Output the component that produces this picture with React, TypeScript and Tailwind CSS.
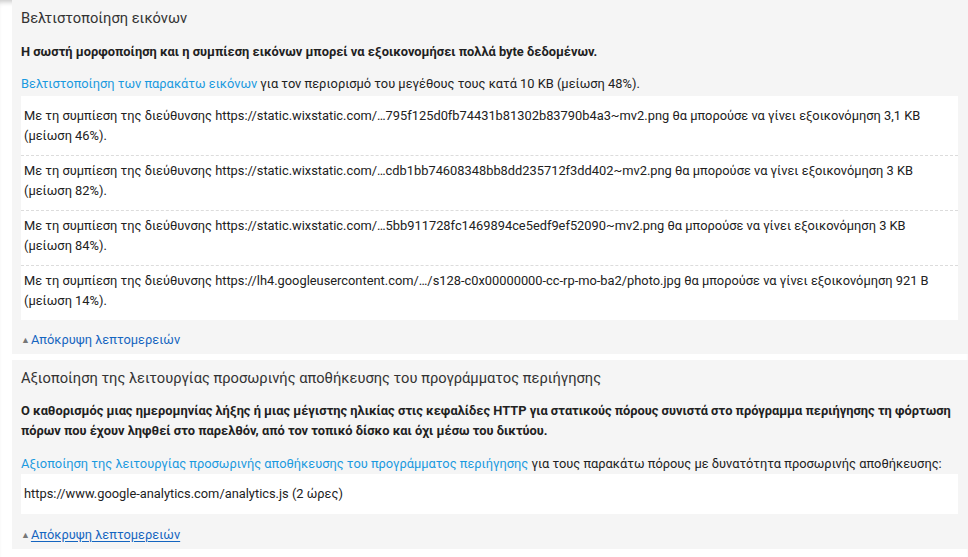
import React from 'react'

type Row = { url: string; saving: string; percent: string }

const imageRows: Row[] = [
  {
    url: 'https://static.wixstatic.com/…795f125d0fb74431b81302b83790b4a3~mv2.png',
    saving: '3,1 KB',
    percent: '46%',
  },
  {
    url: 'https://static.wixstatic.com/…cdb1bb74608348bb8dd235712f3dd402~mv2.png',
    saving: '3 KB',
    percent: '82%',
  },
  {
    url: 'https://static.wixstatic.com/…5bb911728fc1469894ce5edf9ef52090~mv2.png',
    saving: '3 KB',
    percent: '84%',
  },
  {
    url: 'https://lh4.googleusercontent.com/…/s128-c0x00000000-cc-rp-mo-ba2/photo.jpg',
    saving: '921 B',
    percent: '14%',
  },
]

function HideDetails({ underline }: { underline?: boolean }) {
  return (
    <div className="flex items-center h-[20px] text-[12.85px] leading-[20px]">
      <span className="text-[9px] text-[#777] mr-[1px] leading-none">▲</span>
      <a
        href="#"
        className={`text-[#1565c0] ${underline ? 'underline underline-offset-2' : ''}`}
      >
        Απόκρυψη λεπτομερειών
      </a>
    </div>
  )
}

export default function App() {
  return (
    <div
      className="w-full min-h-[557px] bg-white overflow-hidden text-[#212121] shadow-[inset_0_5px_5px_-3px_rgba(0,0,0,0.22)]"
      style={{ fontFamily: 'Roboto, "Noto Sans", sans-serif' }}
    >
      {/* Optimize images */}
      <section className="ml-[12px] bg-[#f5f5f5] pl-[9px] pr-[10px] pt-[6px] pb-[4px]">
        <h3 className="text-[14.7px] leading-[24px] text-[#333]">Βελτιστοποίηση εικόνων</h3>
        <p className="mt-[12px] text-[12.85px] leading-[20px] font-bold">
          Η σωστή μορφοποίηση και η συμπίεση εικόνων μπορεί να εξοικονομήσει πολλά byte δεδομένων.
        </p>
        <p className="mt-[12px] text-[12.85px] leading-[20px]">
          <a href="#" className="text-[#1a9ae0]">Βελτιστοποίηση των παρακάτω εικόνων</a> για τον
          περιορισμό του μεγέθους τους κατά 10 KB (μείωση 48%).
        </p>
        <div className="mt-[2px] bg-white pt-[5px]">
          {imageRows.map((row, i) => (
            <div
              key={row.url}
              className={`pl-[3px] pr-2 pt-[5px] pb-[9px] text-[12.85px] leading-[20px] ${
                i < imageRows.length - 1 ? 'border-b border-dashed border-[#dcdcdc]' : ''
              }`}
            >
              Με τη συμπίεση της διεύθυνσης {row.url} θα μπορούσε να γίνει εξοικονόμηση {row.saving}
              <br />
              (μείωση {row.percent}).
            </div>
          ))}
        </div>
        <div className="mt-[10px]">
          <HideDetails />
        </div>
      </section>

      {/* Browser caching */}
      <section className="mt-[6px] ml-[12px] bg-[#f5f5f5] pl-[9px] pr-[10px] pt-[6px] pb-[4px]">
        <h3 className="text-[14.7px] leading-[24px] text-[#333]">
          Αξιοποίηση της λειτουργίας προσωρινής αποθήκευσης του προγράμματος περιήγησης
        </h3>
        <p className="mt-[11px] text-[12.85px] leading-[20px] font-bold">
          Ο καθορισμός μιας ημερομηνίας λήξης ή μιας μέγιστης ηλικίας στις κεφαλίδες HTTP για
          στατικούς πόρους συνιστά στο πρόγραμμα περιήγησης τη φόρτωση πόρων που έχουν ληφθεί στο
          παρελθόν, από τον τοπικό δίσκο και όχι μέσω του δικτύου.
        </p>
        <p className="mt-[13px] text-[12.85px] leading-[20px]">
          <a href="#" className="text-[#1a9ae0]">
            Αξιοποίηση της λειτουργίας προσωρινής αποθήκευσης του προγράμματος περιήγησης
          </a>{' '}
          για τους παρακάτω πόρους με δυνατότητα προσωρινής αποθήκευσης:
        </p>
        <div className="bg-white pl-[3px] py-[10px] text-[12.85px] leading-[20px]">
          https://www.google-analytics.com/analytics.js (2 ώρες)
        </div>
        <div className="mt-[11px]">
          <HideDetails underline />
        </div>
      </section>
    </div>
  )
}
